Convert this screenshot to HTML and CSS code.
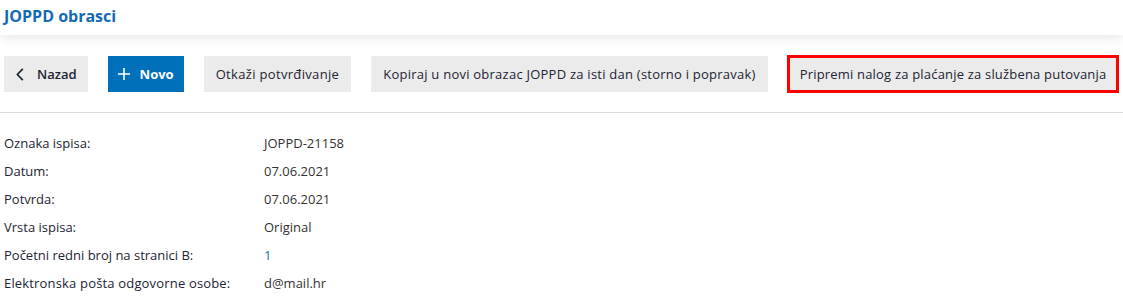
FILE: index.html
```html
<!DOCTYPE html>
<html>
<head>
<meta charset="utf-8">
<link rel="stylesheet" href="styles.css">
</head>
<body>
<header class="header">
  <h1 class="title">JOPPD obrasci</h1>
</header>
<div class="toolbar">
  <button class="btn btn-back">
    <svg class="ico" width="8" height="13" viewBox="0 0 8 13"><path d="M6.8 0.8L1.4 6.5l5.4 5.7" fill="none" stroke="#1d2433" stroke-width="1.7"/></svg>
    <span>Nazad</span>
  </button>
  <button class="btn btn-primary">
    <svg class="ico" width="12" height="12" viewBox="0 0 12 12"><path d="M6 0v12M0 6h12" fill="none" stroke="#fff" stroke-width="1.6"/></svg>
    <span>Novo</span>
  </button>
  <button class="btn wide-3">Otkaži potvrđivanje</button>
  <button class="btn wide-1">Kopiraj u novi obrazac JOPPD za isti dan (storno i popravak)</button>
  <button class="btn btn-marked wide-2b">Pripremi nalog za plaćanje za službena putovanja</button>
</div>
<div class="divider"></div>
<div class="details">
  <div class="row"><span class="label">Oznaka ispisa:</span><span class="value">JOPPD-21158</span></div>
  <div class="row"><span class="label">Datum:</span><span class="value">07.06.2021</span></div>
  <div class="row"><span class="label">Potvrda:</span><span class="value">07.06.2021</span></div>
  <div class="row"><span class="label">Vrsta ispisa:</span><span class="value">Original</span></div>
  <div class="row"><span class="label">Početni redni broj na stranici B:</span><span class="value link">1</span></div>
  <div class="row"><span class="label wide-2">Elektronska pošta odgovorne osobe:</span><span class="value">d@mail.hr</span></div>
</div>
</body>
</html>
```

FILE: styles.css
```css
* { box-sizing: border-box; }
html, body { margin: 0; padding: 0; background: #fff; }
body {
  font-family: "Open Sans", "Liberation Sans", sans-serif;
  font-size: 13px;
  color: #1d2433;
  overflow: hidden;
}
.header {
  height: 35px;
  padding: 0 4px;
  display: flex;
  align-items: center;
  background: #fff;
  box-shadow: 0 3px 12px rgba(0,0,0,0.10);
  position: relative;
}
.title {
  margin: 0;
  font-size: 16px;
  font-weight: 700;
  color: #1469b4;
  line-height: 1;
  padding-bottom: 4px;
}
.toolbar {
  display: flex;
  gap: 20px;
  padding: 21px 4px 0;
  height: 77px;
}
.btn {
  height: 36px;
  border: none;
  background: #ebebeb;
  color: #1d2433;
  font-family: inherit;
  font-size: 13px;
  padding: 0 12px;
  display: flex;
  align-items: center;
  white-space: nowrap;
  cursor: pointer;
}
.btn-back { font-weight: 600; gap: 13px; padding: 0 11px 0 12px; }
.btn-primary { background: #0070ba; color: #fff; font-weight: 700; gap: 10px; padding: 0 10px 0 10px; }
.btn-marked { outline: 3px solid #ff0000; outline-offset: -2px; }
.wide-3 { letter-spacing: 0.33px; }
.wide-2 { letter-spacing: 0.17px; }
.wide-2b { letter-spacing: 0.19px; }
.wide-1 { letter-spacing: 0.24px; }
.ico { display: block; flex: none; }
.divider { height: 1px; background: #dcdcdc; }
.details { padding: 16px 4px 0; }
.row { display: flex; height: 28px; align-items: center; }
.label { width: 260px; flex: none; color: #1d2433; }
.value { color: #333; }
.link { color: #1a6fb8; }
```
